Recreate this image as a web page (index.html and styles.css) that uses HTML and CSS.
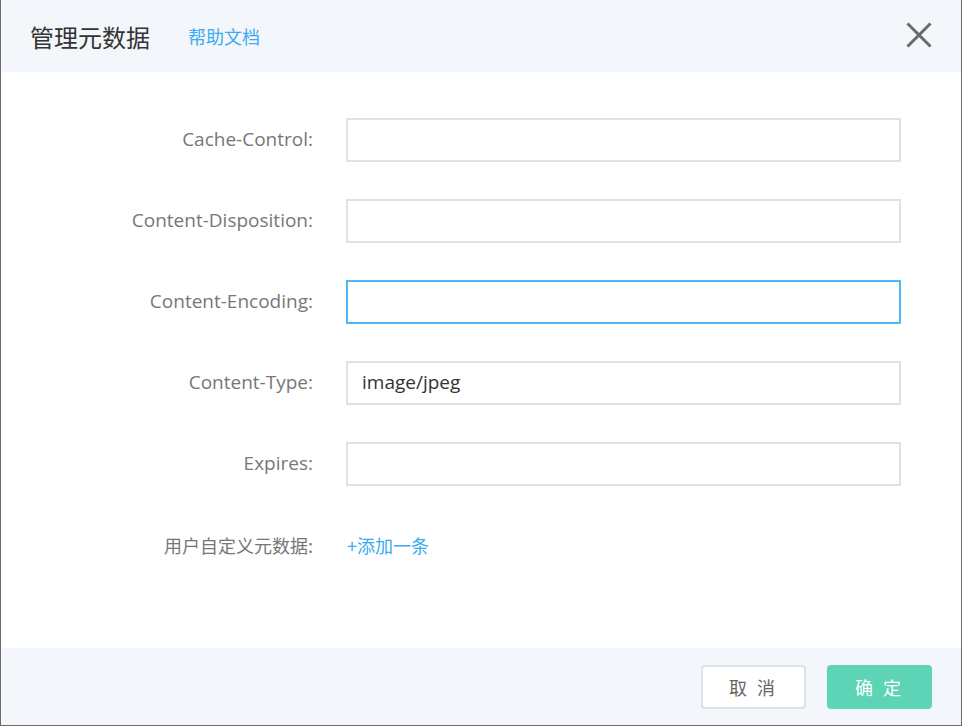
FILE: index.html
```html
<!DOCTYPE html>
<html lang="zh-CN">
<head>
<meta charset="utf-8">
<title>管理元数据</title>
<link rel="stylesheet" href="styles.css">
</head>
<body>
<div class="dialog">
  <div class="dialog-header">
    <span class="dialog-title">管理元数据</span>
    <a class="help-link" href="#">帮助文档</a>
    <button class="close-btn" aria-label="关闭">
      <svg width="26" height="26" viewBox="0 0 26 26"><path d="M1.5 1.5 L24.5 24.5 M24.5 1.5 L1.5 24.5" stroke="#6a6a6a" stroke-width="3" fill="none"/></svg>
    </button>
  </div>
  <div class="dialog-body">
    <div class="form-row">
      <label class="form-label">Cache-Control:</label>
      <div class="form-input"></div>
    </div>
    <div class="form-row">
      <label class="form-label">Content-Disposition:</label>
      <div class="form-input"></div>
    </div>
    <div class="form-row">
      <label class="form-label">Content-Encoding:</label>
      <div class="form-input focused"></div>
    </div>
    <div class="form-row">
      <label class="form-label">Content-Type:</label>
      <div class="form-input">image/jpeg</div>
    </div>
    <div class="form-row">
      <label class="form-label">Expires:</label>
      <div class="form-input"></div>
    </div>
    <div class="form-row">
      <label class="form-label cjk">用户自定义元数据:</label>
      <a class="add-link" href="#">+添加一条</a>
    </div>
  </div>
  <div class="dialog-footer">
    <button class="btn btn-cancel">取 消</button>
    <button class="btn btn-ok">确 定</button>
  </div>
</div>
</body>
</html>
```
FILE: styles.css
```css
* { box-sizing: border-box; }
html, body {
  margin: 0;
  padding: 0;
  height: 100%;
}
body {
  background: #6b6b6b;
  font-family: "Open Sans", "Noto Sans CJK SC", sans-serif;
  padding: 0 1px 1px 1px;
}
.dialog {
  background: #fff;
  height: 725px;
  display: flex;
  flex-direction: column;
}
.dialog-header {
  height: 72px;
  background: #f3f6fa;
  display: flex;
  align-items: center;
  padding: 0 29px 0 29px;
}
.dialog-title {
  font-family: "Noto Sans CJK SC", sans-serif;
  font-size: 24px;
  color: #333;
}
.help-link {
  font-family: "Noto Sans CJK SC", sans-serif;
  font-size: 18px;
  color: #3aabf0;
  text-decoration: none;
  margin-left: 38px;
}
.close-btn {
  margin-left: auto;
  border: 0;
  background: none;
  padding: 0;
  width: 26px;
  height: 26px;
  margin-bottom: 3px;
  cursor: pointer;
}
.close-btn svg { display: block; }
.dialog-body {
  flex: 1;
  padding-top: 46px;
  display: flex;
  flex-direction: column;
  gap: 37px;
}
.form-row {
  display: flex;
  align-items: center;
  height: 44px;
}
.form-label {
  width: 315px;
  padding-right: 3px;
  padding-bottom: 2px;
  text-align: right;
  font-size: 19px;
  color: #777;
}
.form-label.cjk {
  font-family: "Noto Sans CJK SC", sans-serif;
  font-size: 18px;
  padding-bottom: 0;
}
.form-input {
  margin-left: 30px;
  width: 555px;
  height: 44px;
  border: 2px solid #dce2ea;
  background: #fff;
  display: flex;
  align-items: center;
  padding-left: 14px;
  padding-bottom: 2px;
  font-size: 19px;
  color: #333;
}
.form-input.focused {
  border-color: #4cb8f4;
}
.add-link {
  margin-left: 31px;
  font-family: "Noto Sans CJK SC", sans-serif;
  font-size: 18px;
  color: #3aabf0;
  text-decoration: none;
}
.dialog-footer {
  height: 77px;
  background: #f3f6fa;
  display: flex;
  justify-content: flex-end;
  align-items: flex-start;
  padding: 17px 29px 0 0;
  gap: 21px;
}
.btn {
  width: 105px;
  height: 44px;
  border-radius: 4px;
  font-family: "Noto Sans CJK SC", sans-serif;
  font-size: 18px;
  letter-spacing: 3px;
  cursor: pointer;
}
.btn-cancel {
  background: #fff;
  border: 2px solid #dce2ea;
  color: #666;
}
.btn-ok {
  background: #5dd4b5;
  border: 0;
  color: #fff;
}
```
